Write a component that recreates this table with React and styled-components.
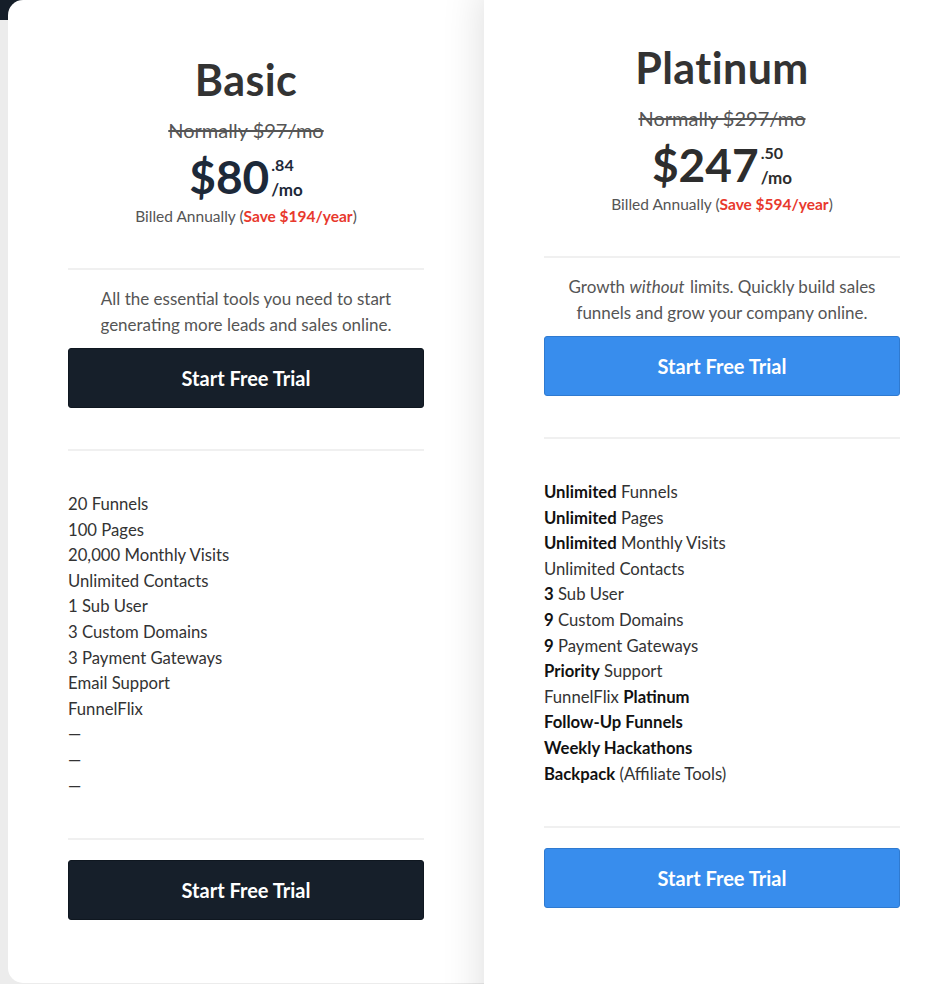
import React from 'react'
import styled, { createGlobalStyle } from 'styled-components'

/*=====================================================
two pricing cards, basic and platinum
platinum sits a bit higher and throws a shadow on basic
=====================================================*/

const Global = createGlobalStyle`
  html, body {
    margin: 0;
    padding: 0;
    overflow: hidden;
  }
  body {
    font-family: Lato, "Liberation Sans", sans-serif;
    color: #333;
  }
`

const plans = [
  {
    name: 'Basic',
    normally: 'Normally $97/mo',
    dollars: '$80',
    cents: '.84',
    priceColor: '#1d2939',
    save: 'Save $194/year',
    desc: <>All the essential tools you need to start generating more leads and sales online.</>,
    dark: true,
    features: [
      ['', '20 Funnels'],
      ['', '100 Pages'],
      ['', '20,000 Monthly Visits'],
      ['', 'Unlimited Contacts'],
      ['', '1 Sub User'],
      ['', '3 Custom Domains'],
      ['', '3 Payment Gateways'],
      ['', 'Email Support'],
      ['', 'FunnelFlix'],
      ['', '—'],
      ['', '—'],
      ['', '—'],
    ],
  },
  {
    name: 'Platinum',
    normally: 'Normally $297/mo',
    dollars: '$247',
    cents: '.50',
    priceColor: '#2d2d2d',
    save: 'Save $594/year',
    desc: <>Growth <em>without</em> limits. Quickly build sales funnels and grow your company online.</>,
    dark: false,
    featured: true,
    features: [
      ['Unlimited', ' Funnels'],
      ['Unlimited', ' Pages'],
      ['Unlimited', ' Monthly Visits'],
      ['', 'Unlimited Contacts'],
      ['3', ' Sub User'],
      ['9', ' Custom Domains'],
      ['9', ' Payment Gateways'],
      ['Priority', ' Support'],
      ['', 'FunnelFlix ', 'Platinum'],
      ['Follow-Up Funnels', ''],
      ['Weekly Hackathons', ''],
      ['Backpack', ' (Affiliate Tools)'],
    ],
  },
]

export default function App() {
  return (
    <Page>
      <Global />
      {plans.map(p => (
        <Card key={p.name} featured={p.featured}>
          <Title>{p.name}</Title>
          <Normally>{p.normally}</Normally>
          <Price color={p.priceColor}>
            <Dollars>{p.dollars}</Dollars>
            <Suffix>
              <span>{p.cents}</span>
              <span>/mo</span>
            </Suffix>
          </Price>
          <Billed>Billed Annually (<Save>{p.save}</Save>)</Billed>
          <Divider top={42} />
          <Desc>{p.desc}</Desc>
          <Button dark={p.dark}>Start Free Trial</Button>
          <Divider top={41} />
          <Features>
            {p.features.map((f, i) => (
              <li key={i}>
                {f[0] && <b>{f[0]}</b>}
                {f[1]}
                {f[2] && <b>{f[2]}</b>}
              </li>
            ))}
          </Features>
          <Divider top={39} />
          <Button dark={p.dark} top={20}>Start Free Trial</Button>
        </Card>
      ))}
    </Page>
  )
}

const Page = styled.div`
  display: flex;
  align-items: flex-start;
  width: 960px;
  height: 984px;
  padding-left: 8px;
  background: linear-gradient(#151e29 0 20px, #ececec 20px);
`

const Card = styled.div`
  position: relative;
  width: 476px;
  flex-shrink: 0;
  box-sizing: border-box;
  padding: 56px 60px ${p => (p.featured ? 120 : 63)}px;
  margin-top: ${p => (p.featured ? -12 : 0)}px;
  background: #fff;
  border-radius: ${p => (p.featured ? '0' : '15px 0 0 15px')};
  z-index: ${p => (p.featured ? 2 : 1)};
  box-shadow: ${p => (p.featured ? '0 0 40px rgba(0,0,0,0.14)' : 'none')};
`

const Title = styled.h2`
  margin: 0;
  text-align: center;
  font-size: 43px;
  line-height: 48px;
  letter-spacing: 0.4px;
  font-weight: 700;
  color: #333;
`

const Normally = styled.div`
  margin-top: 14px;
  text-align: center;
  font-size: 20px;
  line-height: 24px;
  color: #555;
  text-decoration: line-through;
`

const Price = styled.div`
  display: flex;
  justify-content: center;
  align-items: center;
  box-sizing: border-box;
  height: 64px;
  padding-top: 6px;
  color: ${p => p.color};
  font-weight: 700;
`

const Dollars = styled.span`
  font-size: 46px;
  line-height: 56px;
`

const Suffix = styled.span`
  display: flex;
  flex-direction: column;
  margin-left: 2px;
  font-size: 16px;
  line-height: 25px;
  span:last-child {
    font-size: 17px;
  }
`

const Billed = styled.div`
  text-align: center;
  font-size: 15.5px;
  line-height: 20px;
  color: #555;
`

const Save = styled.b`
  color: #e8392d;
`

const Divider = styled.hr`
  margin: ${p => p.top}px 0 0;
  border: 0;
  height: 2px;
  background: #f0f0f0;
`

const Desc = styled.p`
  margin: 16px 0 0;
  text-align: center;
  font-size: 17px;
  line-height: 26px;
  color: #555;
  em {
    font-style: italic;
    padding-right: 1px;
  }
`

const Button = styled.button`
  display: block;
  width: 100%;
  height: 60px;
  margin-top: ${p => p.top || 10}px;
  border: 1px solid ${p => (p.dark ? '#0f1720' : '#2f7ad0')};
  border-radius: 3px;
  background: ${p => (p.dark ? '#161f2a' : '#388ded')};
  color: #fff;
  font-family: inherit;
  font-size: 20px;
  font-weight: 700;
  cursor: pointer;
`

const Features = styled.ul`
  list-style: none;
  margin: 41px 0 0;
  padding: 0;
  font-size: 16.7px;
  line-height: 25.6px;
  color: #333;
  b {
    color: #111;
  }
`
